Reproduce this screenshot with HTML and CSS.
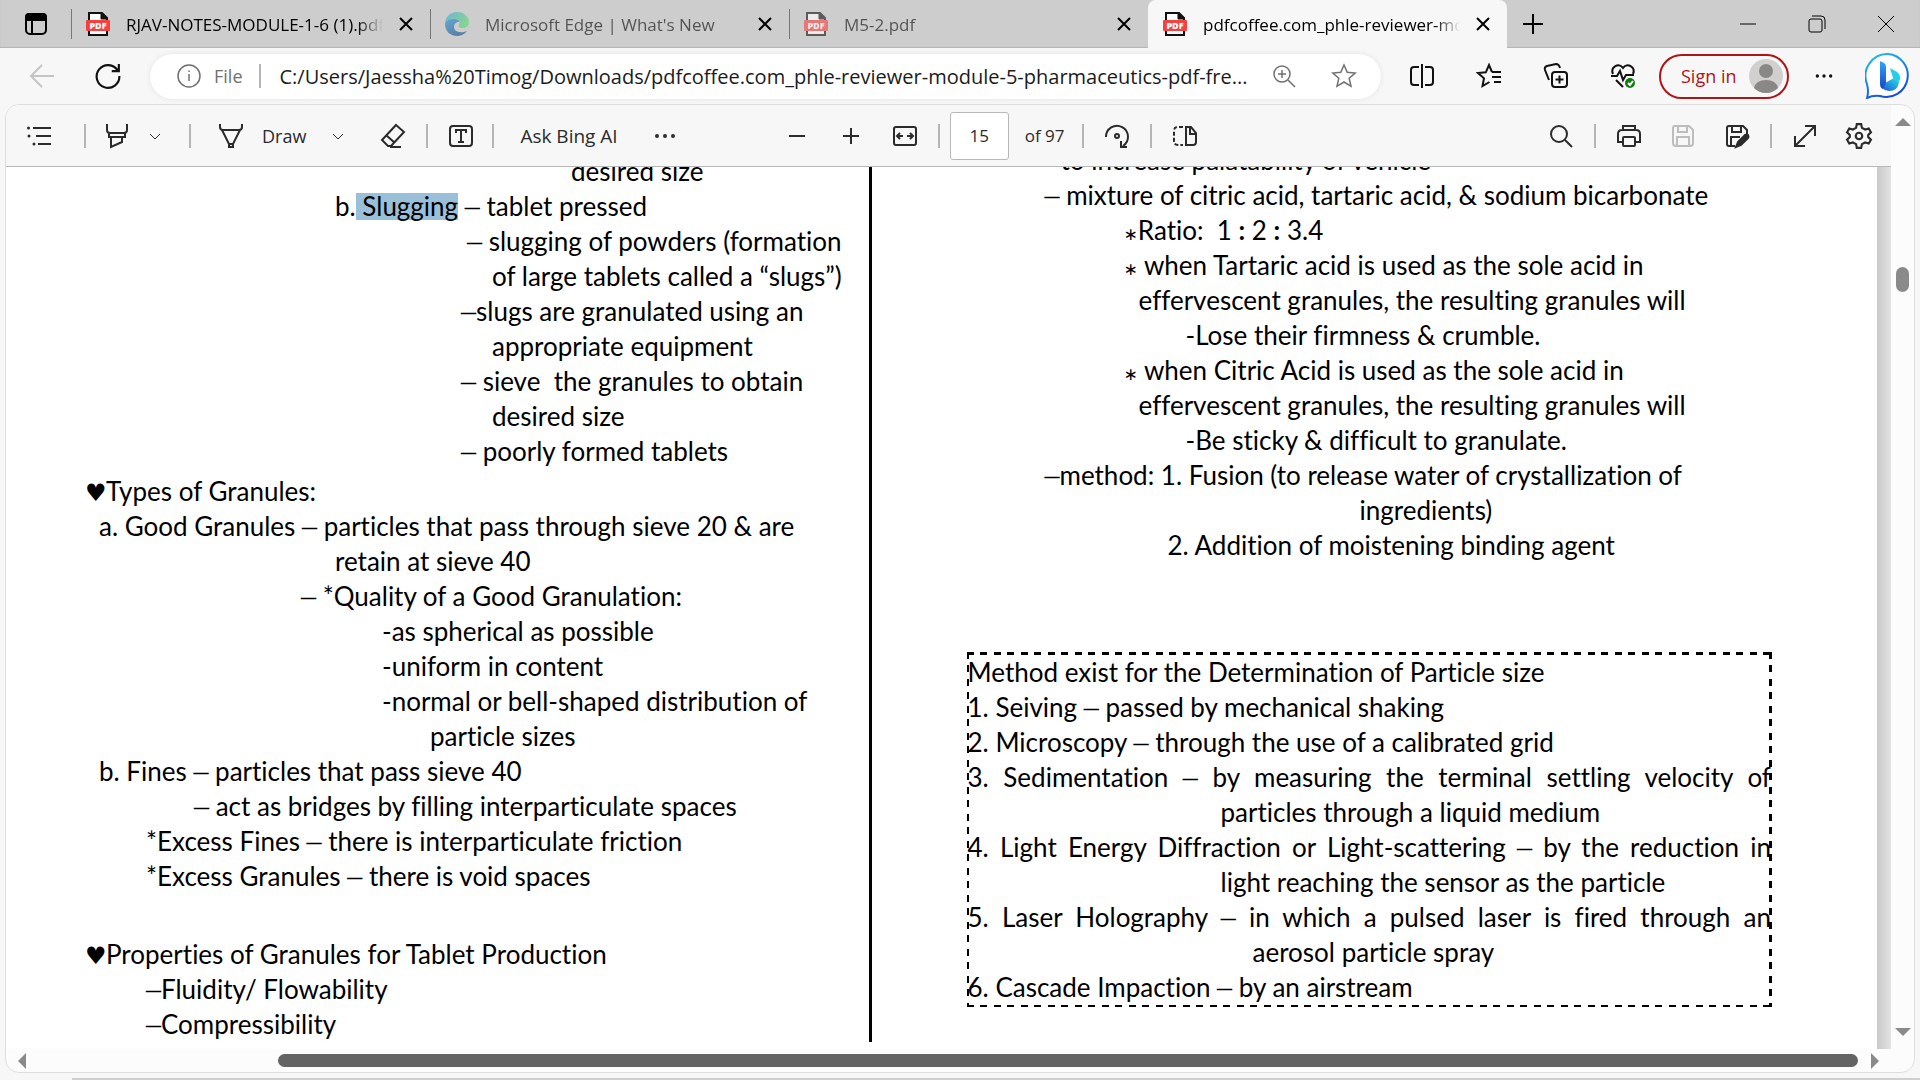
FILE: index.html
```html
<!DOCTYPE html>
<html lang="en">
<head>
    <meta charset="UTF-8">
    <meta name="viewport" content="width=device-width, initial-scale=1.0">
    <title>pdfcoffee.com_phle-reviewer-module-5</title>
    <link rel="stylesheet" href="styles.css">
</head>
<body>
    <svg class="symbols" aria-hidden="true">
        <symbol id="pdf" viewBox="0 0 24 24">
            <path d="M3 1h13l5 5v17H3z" fill="#fff" stroke="#111" stroke-width="2"/>
            <path d="M15 1v6h6z" fill="#111" stroke="#111"/>
            <rect x="0" y="8" width="24" height="11" rx="1" fill="#f8403c"/>
            <text x="12" y="17" text-anchor="middle" class="pdf-label">PDF</text>
        </symbol>
        <symbol id="close" viewBox="0 0 14 14"><path d="M1 1l12 12M13 1L1 13"/></symbol>
        <symbol id="chevron" viewBox="0 0 14 14"><path d="M2 5l5 5 5-5"/></symbol>
        <symbol id="dots" viewBox="0 0 24 24"><g fill="currentColor" stroke="none"><circle cx="4" cy="12" r="2"/><circle cx="12" cy="12" r="2"/><circle cx="20" cy="12" r="2"/></g></symbol>
    </svg>

    <header class="tab-strip">
        <button class="tab-actions" aria-label="Tab actions menu">
            <svg class="icon" viewBox="0 0 24 24"><rect x="2" y="2" width="20" height="20" rx="4"/><path d="M2 8V5q0-3 3-3h14q3 0 3 3v3z" fill="currentColor"/><path d="M8 8v14"/></svg>
        </button>
        <div class="tab">
            <svg class="tab-icon"><use href="#pdf"/></svg>
            <span class="tab-title fade">RJAV-NOTES-MODULE-1-6 (1).pdf</span>
            <button aria-label="Close tab"><svg class="icon small"><use href="#close"/></svg></button>
        </div>
        <div class="tab">
            <svg class="tab-icon dim" viewBox="0 0 24 24">
                <defs>
                    <linearGradient id="edge-top" x1="0" y1="0" x2="1" y2="0.6"><stop offset="0" stop-color="#2aa9e0"/><stop offset="1" stop-color="#5bd96a"/></linearGradient>
                    <linearGradient id="edge-low" x1="0" y1="0" x2="0.6" y2="1"><stop offset="0" stop-color="#1b8ed6"/><stop offset="1" stop-color="#114a8b"/></linearGradient>
                </defs>
                <path d="M0 12C0 5 5 0 12 0s12 5 12 10c0 4-3 6-6 6-4 0-5-1-4-3 2-3-1-6-5-6-4 0-8 2-9 5z" fill="url(#edge-top)"/>
                <path d="M0 12c1-4 5-5 9-5 3 0 5 1 5 3-3 0-5 2-5 5 0 4 5 7 13 4-3 4-7 5-10 5C5 24 0 19 0 12z" fill="url(#edge-low)"/>
            </svg>
            <span class="tab-title dim">Microsoft Edge | What's New</span>
            <button aria-label="Close tab"><svg class="icon small"><use href="#close"/></svg></button>
        </div>
        <div class="tab">
            <svg class="tab-icon dim"><use href="#pdf"/></svg>
            <span class="tab-title dim">M5-2.pdf</span>
            <button aria-label="Close tab"><svg class="icon small"><use href="#close"/></svg></button>
        </div>
        <div class="tab active">
            <svg class="tab-icon"><use href="#pdf"/></svg>
            <span class="tab-title fade">pdfcoffee.com_phle-reviewer-mo</span>
            <button aria-label="Close tab"><svg class="icon small"><use href="#close"/></svg></button>
        </div>
        <button class="new-tab" aria-label="New tab"><svg class="icon" viewBox="0 0 24 24"><path d="M12 2v20M2 12h20"/></svg></button>
        <div class="window-buttons">
            <button aria-label="Minimize"><svg class="icon thin" viewBox="0 0 24 24"><path d="M4 12h16"/></svg></button>
            <button aria-label="Restore"><svg class="icon thin" viewBox="0 0 24 24"><rect x="4" y="7" width="13" height="13" rx="2"/><path d="M7 4h9q4 0 4 4v9"/></svg></button>
            <button aria-label="Close window"><svg class="icon thin" viewBox="0 0 24 24"><path d="M4 4l16 16M20 4L4 20"/></svg></button>
        </div>
    </header>

    <nav class="nav-bar">
        <button class="back" aria-label="Back" disabled><svg class="icon" viewBox="0 0 24 24"><path d="M24 12H1M12 1L1 12l11 11"/></svg></button>
        <button class="refresh" aria-label="Refresh"><svg class="icon large" viewBox="0 0 24 24"><path d="M21 7a10.500 10.500 0 1 0 1.500 5M22 1v6.500h-6.500"/></svg></button>
        <div class="address">
            <svg class="icon light" viewBox="0 0 24 24"><circle cx="12" cy="12" r="11"/><path d="M12 10v7M12 6.500v1.500"/></svg>
            <span class="scheme">File</span>
            <span class="divider"></span>
            <input class="url" type="text" aria-label="Address" value="C:/Users/Jaessha%20Timog/Downloads/pdfcoffee.com_phle-reviewer-module-5-pharmaceutics-pdf-fre...">
            <button aria-label="Zoom"><svg class="icon light" viewBox="0 0 24 24"><circle cx="10" cy="10" r="8"/><path d="M16 16l7 7M10 6v8M6 10h8"/></svg></button>
            <button class="star" aria-label="Add to favorites"><svg class="icon light" viewBox="0 0 24 24"><path d="M12 1l3.200 7.300 8 .7-6 5.300 1.800 8L12 18l-7 4.300 1.800-8L.8 9l8-.7z"/></svg></button>
        </div>
        <div class="nav-tools">
            <button aria-label="Split screen"><svg class="icon" viewBox="0 0 24 24"><path d="M9 3H4Q1 3 1 6v12q0 3 3 3h5M15 3h5q3 0 3 3v12q0 3-3 3h-5M12 0v24"/></svg></button>
            <button aria-label="Favorites"><svg class="icon" viewBox="0 0 24 24"><path d="M15 8l-3-7-3.200 7.300L1 9l6 5.300L5.500 22l7-4M15 8h9M15 13h9M17 18h7"/></svg></button>
            <button aria-label="Collections"><svg class="icon" viewBox="0 0 24 24"><rect x="8" y="8" width="15" height="15" rx="3"/><path d="M15.500 11.500v8M11.500 15.500h8M5 16L1 6q-1-3 2-4l9-2q3 0 4 4"/></svg></button>
            <button aria-label="Browser essentials"><svg class="icon" viewBox="0 0 24 24"><path d="M2 10C-1 3 8-2 12 4c4-6 13-1 10 6M0 12h6l3-5 3 9 3-5h8M5 16l7 7"/><circle cx="19" cy="19" r="5" fill="#107c10" stroke="none"/><path d="M17 19l2 2 3-4" stroke="#fff"/></svg></button>
        </div>
        <button class="sign-in">Sign in
            <svg class="avatar" viewBox="0 0 34 34"><circle cx="17" cy="17" r="17" fill="#d2d0ce"/><circle cx="17" cy="12" r="7" fill="#8a8886"/><path d="M5 29q2-8 12-8t12 8q-5 5-12 5T5 29z" fill="#8a8886"/></svg>
        </button>
        <button class="more" aria-label="Settings and more"><svg class="icon"><use href="#dots"/></svg></button>
        <button class="bing" aria-label="Bing chat">
            <svg class="bing-icon" viewBox="0 0 46 46">
                <defs>
                    <linearGradient id="ring" x1="0" y1="0" x2="0.500" y2="1"><stop offset="0" stop-color="#1fc8ee"/><stop offset="1" stop-color="#1a4bd8"/></linearGradient>
                    <linearGradient id="stem" x1="0" y1="0" x2="0" y2="1"><stop offset="0" stop-color="#2fa8f5"/><stop offset="1" stop-color="#1746c8"/></linearGradient>
                    <linearGradient id="bowl" x1="0" y1="1" x2="1" y2="0"><stop offset="0" stop-color="#1a56dc"/><stop offset="1" stop-color="#2be0e0"/></linearGradient>
                </defs>
                <path d="M23 1a21.500 21.500 0 1 1-8 42q-7-1-13 2 2-6 0-14A22 22 0 0 1 23 1z" fill="#fff" stroke="url(#ring)" stroke-width="2"/>
                <path d="M20 30l9-5 5 4q-1 9-10 9-4 0-7-3z" fill="url(#bowl)"/>
                <path d="M25 15l7 4q5 4 2 10l-6-4z" fill="#24cfe8"/>
                <path d="M15 8l4 2q2 1 2 4v16l-3 6q-3-1-3-5z" fill="url(#stem)"/>
            </svg>
        </button>
    </nav>

    <main class="viewer">
        <div class="document">
            <div class="pdf-toolbar">
                <div class="tools">
                    <button aria-label="Contents"><svg class="icon" viewBox="0 0 24 24"><path d="M6 4h18M9 12h15M11 20h13"/><g fill="currentColor" stroke="none"><circle cx="1.500" cy="4" r="1.500"/><circle cx="2" cy="12" r="1.500"/><circle cx="7" cy="20" r="1.500"/></g></svg></button>
                    <span class="divider push"></span>
                    <button aria-label="Highlight"><svg class="icon" viewBox="0 0 24 24"><path d="M2 0v6q0 3 3 3h14q3 0 3-3V0M4 9v4h16V9M6 13v10l11-5v-5"/></svg></button>
                    <button class="chevron" aria-label="Highlight colors"><svg class="icon small thin"><use href="#chevron"/></svg></button>
                    <span class="divider both"></span>
                    <button class="draw" aria-label="Pen"><svg class="icon" viewBox="0 0 24 24"><path d="M1 0v3q0 3 3 3h16q3 0 3-3V0M3 6l7 14h4l7-14M10 20v3h4v-3"/></svg></button>
                    <button class="label">Draw</button>
                    <button class="chevron spaced" aria-label="Pen options"><svg class="icon small thin"><use href="#chevron"/></svg></button>
                    <button class="eraser" aria-label="Erase"><svg class="icon" viewBox="0 0 24 24"><path d="M15 1l8 7-13 14H7l-6-6zM5 11l9 8M9 23h11"/></svg></button>
                    <span class="divider even"></span>
                    <button aria-label="Add text"><svg class="icon" viewBox="0 0 24 24"><rect x="1" y="2" width="22" height="20" rx="3"/><path d="M7 9V6h10v3M12 6v12M9 18h6"/></svg></button>
                    <span class="divider"></span>
                    <button class="label ask">Ask Bing AI</button>
                    <button class="overflow" aria-label="More tools"><svg class="icon"><use href="#dots"/></svg></button>
                </div>
                <div class="paging">
                    <button aria-label="Zoom out"><svg class="icon" viewBox="0 0 24 24"><path d="M4 12h16"/></svg></button>
                    <button class="zoom-in" aria-label="Zoom in"><svg class="icon" viewBox="0 0 24 24"><path d="M4 12h16M12 4v16"/></svg></button>
                    <button class="fit" aria-label="Fit to width"><svg class="icon" viewBox="0 0 24 24"><rect x="1" y="3" width="22" height="18" rx="2"/><path d="M10 12H4M7 9l-3 3 3 3M14 12h6M17 9l3 3-3 3"/></svg></button>
                    <span class="divider"></span>
                    <input class="page-number" id="page-number" type="text" value="15">
                    <label for="page-number">of 97</label>
                    <span class="divider"></span>
                    <button aria-label="Rotate"><svg class="icon" viewBox="0 0 24 24"><path d="M1 13A11 11 0 1 1 18 22M16 17v6h6"/><circle cx="12" cy="12" r="2"/></svg></button>
                    <span class="divider"></span>
                    <button aria-label="Page view"><svg class="icon" viewBox="0 0 24 24"><path d="M13 3h5l5 6v9q0 3-3 3h-7zM17 3v7h6"/><path d="M10 3H5Q1 3 1 7v10q0 4 4 4h5" stroke-dasharray="4 2"/></svg></button>
                </div>
                <div class="file-tools">
                    <button aria-label="Find"><svg class="icon" viewBox="0 0 24 24"><circle cx="10" cy="10" r="8"/><path d="M16 16l7 7"/></svg></button>
                    <span class="divider"></span>
                    <button aria-label="Print"><svg class="icon" viewBox="0 0 24 24"><path d="M6 6V2h12v4M5 18H1V10q0-4 4-4h14q4 0 4 4v8h-4"/><rect x="6" y="13" width="12" height="9" rx="1"/></svg></button>
                    <button class="apart" aria-label="Save" disabled><svg class="icon" viewBox="0 0 24 24"><path d="M4 2h14l4 4v13q0 3-3 3H5q-3 0-3-3V4q0-2 2-2zM7 2v6h9V2M6 22v-9h12v9"/></svg></button>
                    <button class="apart" aria-label="Save as"><svg class="icon" viewBox="0 0 24 24"><path d="M10 22H4q-2 0-2-2V4q0-2 2-2h14l4 4v4M7 2v6h9V2M6 22v-9h9"/><path d="M13 18l7-7q2-1 3 0 1 2 0 3l-7 7-5 2z" fill="currentColor"/></svg></button>
                    <span class="divider"></span>
                    <button aria-label="Full screen"><svg class="icon" viewBox="0 0 24 24"><path d="M2 22L22 2M12 2h10v10M2 12v10h10"/></svg></button>
                    <button class="apart" aria-label="Settings"><svg class="icon large" viewBox="0 0 24 24"><path d="M10 1h4l.7 3.500 3 1.500L21 5l2 3.500-2.500 2.500v2l2.500 2.500L21 19l-3.300-1-3 1.500L14 23h-4l-.7-3.500-3-1.500L3 19l-2-3.500L3.500 13v-2L1 8.500 3 5l3.300 1 3-1.500z"/><circle cx="12" cy="12" r="3"/></svg></button>
                </div>
            </div>

            <div class="pages">
                <article class="page">
                    <section class="column left">
                        <p class="in-7">desired size</p>
                        <p class="in-4">b.<mark> Slugging</mark> <i>–</i> tablet pressed</p>
                        <p class="in-first"><i>–</i> slugging of powders (formation</p>
                        <p class="in-6">of large tablets called a “slugs”)</p>
                        <p class="in-5"><i>–</i>slugs are granulated using an</p>
                        <p class="in-6">appropriate equipment</p>
                        <p class="in-5"><i>–</i> sieve&nbsp; the granules to obtain</p>
                        <p class="in-6">desired size</p>
                        <p class="in-5"><i>–</i> poorly formed tablets</p>
                        <p class="topic"><b>♥</b>Types of Granules:</p>
                        <p class="in-1">a. Good Granules <i>–</i> particles that pass through sieve 20 &amp; are</p>
                        <p class="in-4">retain at sieve 40</p>
                        <p class="in-quality"><i>–</i> *Quality of a Good Granulation:</p>
                        <p class="in-list">-as spherical as possible</p>
                        <p class="in-list">-uniform in content</p>
                        <p class="in-list">-normal or bell-shaped distribution of</p>
                        <p class="in-wrap">particle sizes</p>
                        <p class="in-1">b. Fines <i>–</i> particles that pass sieve 40</p>
                        <p class="in-3"><i>–</i> act as bridges by filling interparticulate spaces</p>
                        <p class="in-2">*Excess Fines <i>–</i> there is interparticulate friction</p>
                        <p class="in-2">*Excess Granules <i>–</i> there is void spaces</p>
                        <p class="topic blank"><b>♥</b>Properties of Granules for Tablet Production</p>
                        <p class="in-2"><i>–</i>Fluidity/ Flowability</p>
                        <p class="in-2"><i>–</i>Compressibility</p>
                    </section>
                    <section class="column right">
                        <p class="to-2">to increase palatability of vehicle</p>
                        <p class="to-1"><i>–</i> mixture of citric acid, tartaric acid, &amp; sodium bicarbonate</p>
                        <p class="to-3"><em>∗</em>Ratio:&nbsp; 1 <strong>:</strong> 2 <strong>:</strong> 3.4</p>
                        <p class="to-3"><em>∗</em> when Tartaric acid is used as the sole acid in</p>
                        <p class="to-4">effervescent granules, the resulting granules will</p>
                        <p class="to-6">-Lose their firmness &amp; crumble.</p>
                        <p class="to-3"><em>∗</em> when Citric Acid is used as the sole acid in</p>
                        <p class="to-4">effervescent granules, the resulting granules will</p>
                        <p class="to-6">-Be sticky &amp; difficult to granulate.</p>
                        <p class="to-1"><i>–</i>method: 1. Fusion (to release water of crystallization of</p>
                        <p class="to-7">ingredients)</p>
                        <p class="to-5">2. Addition of moistening binding agent</p>
                        <div class="boxed">
                            <p>Method exist for the Determination of Particle size</p>
                            <p>1. Seiving <i>–</i> passed by mechanical shaking</p>
                            <p>2. Microscopy <i>–</i> through the use of a calibrated grid</p>
                            <p class="justify">3. Sedimentation <i>–</i> by measuring the terminal settling velocity of</p>
                            <p class="hang">particles through a liquid medium</p>
                            <p class="justify">4. Light Energy Diffraction or Light-scattering <i>–</i> by the reduction in</p>
                            <p class="hang">light reaching the sensor as the particle</p>
                            <p class="justify">5. Laser Holography <i>–</i> in which a pulsed laser is fired through an</p>
                            <p class="hang deep">aerosol particle spray</p>
                            <p>6. Cascade Impaction <i>–</i> by an airstream</p>
                        </div>
                    </section>
                </article>
            </div>
        </div>

        <div class="scroll-v">
            <svg class="arrow" viewBox="0 0 16 8"><path d="M0 8l8-8 8 8z"/></svg>
            <div class="track"><div class="thumb"></div></div>
            <svg class="arrow" viewBox="0 0 16 8"><path d="M0 0l8 8 8-8z"/></svg>
        </div>
        <div class="scroll-h">
            <svg class="arrow" viewBox="0 0 8 16"><path d="M8 0L0 8l8 8z"/></svg>
            <div class="track"><div class="thumb"></div></div>
            <svg class="arrow" viewBox="0 0 8 16"><path d="M0 0l8 8-8 8z"/></svg>
        </div>
    </main>
    <footer class="taskbar-edge"></footer>
</body>
</html>
```

FILE: styles.css
```css
* {
    margin: 0;
    padding: 0;
    box-sizing: border-box;
}

body {
    font-family: "Open Sans", "Noto Sans", sans-serif;
    font-size: 18px;
    color: #1b1b1b;
    background: #f7f7f7;
    height: 100vh;
    display: flex;
    flex-direction: column;
    overflow: hidden;
}

button {
    border: none;
    background: none;
    color: inherit;
    font: inherit;
    display: flex;
    align-items: center;
    justify-content: center;
    flex: none;
}

input {
    border: none;
    background: none;
    font: inherit;
    color: inherit;
    min-width: 0;
}

.symbols {
    display: none;
}

.pdf-label {
    font-family: "Open Sans", sans-serif;
    font-size: 9px;
    font-weight: 800;
    fill: #fff;
}

.icon {
    width: 24px;
    height: 24px;
    fill: none;
    stroke: currentColor;
    stroke-width: 2;
    overflow: visible;
    flex: none;
}

.icon.small {
    width: 14px;
    height: 14px;
}

.icon.large {
    width: 26px;
    height: 26px;
}

.icon.thin {
    stroke-width: 1;
}

.icon.light {
    stroke-width: 1.5;
}

.divider {
    width: 2px;
    height: 24px;
    background: #b5b5b5;
    flex: none;
}

/* tabs */
.tab-strip {
    display: flex;
    height: 48px;
    background: #cdcdcd;
    box-shadow: inset 0 -1px 1px #b4b4b4;
    color: #000;
    flex: none;
}

.tab-actions {
    width: 71px;
}

.tab {
    flex: 0 1 359px;
    min-width: 0;
    display: flex;
    align-items: center;
    gap: 16px;
    padding: 0 17px 0 15px;
    background: linear-gradient(#777, #777) left center / 1px 30px no-repeat;
}

.tab.active {
    background: #f7f7f7;
    border-radius: 8px 8px 0 0;
}

.tab-icon {
    width: 24px;
    height: 24px;
    flex: none;
}

.tab-title {
    flex: 1;
    font-size: 17px;
    white-space: nowrap;
    overflow: hidden;
}

.fade {
    mask-image: linear-gradient(to right, #000 90%, transparent);
}

.dim {
    opacity: 0.6;
}

.new-tab {
    width: 52px;
}

.window-buttons {
    display: flex;
    margin-left: auto;
}

.window-buttons button {
    width: 69px;
}

/* address row */
.nav-bar {
    display: flex;
    align-items: center;
    height: 56px;
    color: #111;
    flex: none;
}

.back {
    width: 84px;
    color: #c4c4c4;
}

.refresh {
    width: 48px;
    margin-right: 18px;
}

.address {
    flex: 1;
    display: flex;
    align-items: center;
    height: 45px;
    padding: 0 25px 0 27px;
    border-radius: 23px;
    background: #fff;
    box-shadow: 0 0 5px #e2e2e2;
    color: #707070;
}

.scheme {
    margin: 0 16px 0 13px;
}

.url {
    flex: 1;
    margin-left: 19px;
    color: #1b1b1b;
    font-size: 20px;
}

.star {
    margin-left: 36px;
}

.nav-tools {
    display: flex;
    gap: 43px;
    margin: 0 24px 0 29px;
}

.sign-in {
    width: 130px;
    height: 45px;
    justify-content: space-between;
    padding: 0 4px 0 20px;
    border: 2px solid #ad1518;
    border-radius: 23px;
    color: #ad1518;
}

.avatar {
    width: 34px;
    height: 34px;
}

.more {
    width: 76px;
    padding-right: 6px;
}

.more .icon {
    width: 20px;
}

.bing {
    margin-right: 9px;
}

.bing-icon {
    width: 46px;
    height: 46px;
}

/* viewer frame */
.viewer {
    flex: 1;
    min-height: 0;
    display: grid;
    grid-template: minmax(0, 1fr) 23px / minmax(0, 1fr) 23px;
    margin: 0 5px 5px 5px;
    border: 1px solid #dedede;
    border-radius: 14px;
    background: #fcfcfc;
    overflow: hidden;
}

.document {
    display: flex;
    flex-direction: column;
    min-height: 0;
}

.pdf-toolbar {
    display: flex;
    align-items: center;
    height: 62px;
    padding: 0 17px 0 18px;
    background: #f7f7f7;
    border-bottom: 1px solid #b8b8b8;
    color: #2b2b2b;
    flex: none;
}

.pdf-toolbar button {
    min-width: 30px;
    height: 40px;
}

.pdf-toolbar .chevron {
    min-width: 14px;
}

.pdf-toolbar button:disabled {
    color: #bdbdbd;
}

.tools,
.paging,
.file-tools {
    display: flex;
    align-items: center;
    gap: 18px;
}

.tools {
    gap: 16px;
}

.paging {
    margin-left: 102px;
}

.file-tools {
    margin-left: auto;
}

.divider.push {
    margin-left: 14px;
}

.divider.both {
    margin: 0 9px 0 11px;
}

.divider.even {
    margin: 0 2px;
}

.chevron.spaced {
    margin-left: 9px;
}

.eraser {
    margin-left: 17px;
}

.ask {
    margin: 0 12px 0 10px;
}

.pdf-toolbar .ask {
    font-size: 19px;
}

.overflow {
    margin-left: 4px;
}

.zoom-in,
.fit,
.apart {
    margin-left: 6px;
}

.page-number {
    width: 59px;
    height: 48px;
    margin: 0 -2px 0 -8px;
    border: 1px solid #b8b8b8;
    border-radius: 3px;
    background: #fff;
    text-align: center;
    font-size: 17px;
}

.paging label {
    font-size: 17px;
}

/* document pages, scrolled part way down */
.pages {
    flex: 1;
    min-height: 0;
    overflow: hidden;
    padding-right: 14px;
    background: linear-gradient(to right, #c9c9c9, #e2e2e2) right / 14px 100% no-repeat;
}

.page {
    display: grid;
    grid-template-columns: 866fr 1006fr;
    height: 100%;
    background: #fff;
    color: #000;
    font-family: Lato, sans-serif;
    font-size: 26px;
    font-variant-ligatures: none;
    line-height: 35px;
    white-space: nowrap;
}

.page i {
    font-family: "Liberation Serif", serif;
    font-style: normal;
    font-size: 30px;
    line-height: 0;
}

/* small low asterisk used as a bullet */
.page em {
    font-family: "DejaVu Sans", sans-serif;
    font-style: normal;
    font-size: 17px;
    line-height: 0;
}

.page b {
    display: inline-block;
    width: 21px;
    font-family: "DejaVu Sans", sans-serif;
    font-weight: normal;
    font-size: 24px;
    line-height: 0;
}

.page mark {
    display: inline-block;
    height: 27px;
    line-height: 27px;
    background: #9ac0d9;
    white-space: pre;
}

.column.left {
    margin-top: -13px;
    margin-bottom: 7px;
    border-right: 3px solid #000;
}

.column.right {
    margin-top: -24px;
}

.topic {
    margin-top: 5px;
    padding-left: 79px;
}

.topic.blank {
    margin-top: 43px;
}

.in-1 { padding-left: 93px; }
.in-2 { padding-left: 140px; }
.in-3 { padding-left: 188px; }
.in-4 { padding-left: 329px; }
.in-5 { padding-left: 455px; }
.in-6 { padding-left: 486px; }
.in-7 { padding-left: 565px; }
.in-first { padding-left: 461px; }
.in-quality { padding-left: 295px; }
.in-list { padding-left: 376px; }
.in-wrap { padding-left: 424px; }

.to-1 { padding-left: 173px; }
.to-2 { padding-left: 189px; }
.to-3 { padding-left: 252px; }
.to-4 { padding-left: 267px; }
.to-5 { padding-left: 296px; }
.to-6 { padding-left: 314px; }
.to-7 { padding-left: 488px; }

.boxed {
    margin: 89px 105px 0 95px;
    padding: 3px 1px 2px 1px;
    background:
        repeating-linear-gradient(to right, #000 0 7px, transparent 7px 13px, #000 13px 20px, transparent 20px 27px) top / 100% 3px no-repeat,
        repeating-linear-gradient(to right, #000 0 7px, transparent 7px 13px, #000 13px 20px, transparent 20px 27px) bottom / 100% 2px no-repeat,
        repeating-linear-gradient(#000 0 7px, transparent 7px 13px, #000 13px 20px, transparent 20px 27px) left / 2px 100% no-repeat,
        repeating-linear-gradient(#000 0 7px, transparent 7px 13px, #000 13px 20px, transparent 20px 27px) right / 3px 100% no-repeat;
}

.justify {
    text-align-last: justify;
    white-space: normal;
}

.hang {
    padding-left: 253px;
}

.hang.deep {
    padding-left: 285px;
}

/* scrollbars */
.scroll-v,
.scroll-h {
    display: flex;
    align-items: center;
}

.scroll-v {
    flex-direction: column;
    padding: 13px 0;
}

.scroll-h {
    padding: 0 12px;
}

.arrow {
    width: 16px;
    height: 8px;
    fill: #8a8a8a;
    flex: none;
}

.scroll-h .arrow {
    width: 8px;
    height: 16px;
}

.track {
    flex: 1;
    display: flex;
}

.scroll-v .thumb {
    width: 13px;
    height: 25px;
    margin-top: 141px;
    border-radius: 7px;
    background: #8a8a8a;
}

.scroll-h .thumb {
    flex: 1;
    height: 13px;
    margin: 0 13px 0 252px;
    border-radius: 7px;
    background: #636363;
}

.taskbar-edge {
    height: 2px;
    margin-left: 72px;
    background: #cfcfcf;
    flex: none;
}
```
